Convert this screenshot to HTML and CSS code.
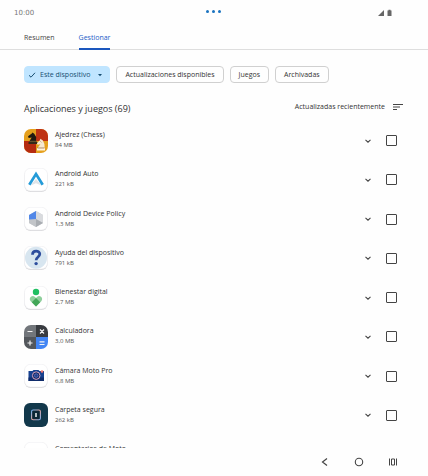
FILE: index.html
```html
<!DOCTYPE html>
<html lang="es">
<head>
    <meta charset="UTF-8">
    <meta name="viewport" content="width=device-width, initial-scale=1.0">
    <title>Gestionar aplicaciones</title>
    <link rel="stylesheet" href="styles.css">
</head>
<body>
    <!-- Formas compartidas -->
    <svg class="defs" width="0" height="0">
        <symbol id="chevron" viewBox="0 0 8 8"><path d="M1.5 2.8 4 5.2 6.5 2.8" fill="none" stroke="#444" stroke-width="1.1"/></symbol>
        <symbol id="tile" viewBox="0 0 24 24">
            <rect x="0.5" y="1" width="23" height="23" rx="6" fill="#d8d8da"/>
            <rect x="0.5" y="0.3" width="23" height="22.7" rx="6" fill="#fff" stroke="#ededf0" stroke-width="0.6"/>
        </symbol>
        <clipPath id="round"><rect width="24" height="24" rx="7"/></clipPath>
    </svg>

    <div class="screen">
        <header class="status-bar">
            <span class="clock">10:00</span>
            <div class="dots"><i></i><i></i><i></i></div>
            <svg class="status-icons" width="16" height="8" viewBox="0 0 16 8">
                <path d="M1 7 7 1V7Z" fill="#666"/>
                <path d="M10.5 1.6h1V.8h2v.8h1V7h-4Z" fill="#666"/>
            </svg>
        </header>

        <nav class="tabs">
            <a class="tab" href="#resumen">Resumen</a>
            <a class="tab active" href="#gestionar">Gestionar</a>
        </nav>

        <main class="content">
            <div class="chips">
                <button class="chip selected">
                    <svg width="8" height="8" viewBox="0 0 8 8"><path d="M1 4.3 3 6.2 7 1.8" fill="none" stroke="#164e72"/></svg>
                    Este dispositivo
                    <svg class="caret" width="6" height="6" viewBox="0 0 6 6"><path d="M1 2h4L3 4.3Z" fill="#164e72"/></svg>
                </button>
                <button class="chip">Actualizaciones disponibles</button>
                <button class="chip">Juegos</button>
                <button class="chip">Archivadas</button>
            </div>

            <div class="list-header">
                <h1>Aplicaciones y juegos (69)</h1>
                <button class="sort">
                    Actualizadas recientemente
                    <svg width="10" height="8" viewBox="0 0 10 8"><path d="M0 1.5h10M0 4h7M0 6.5h4" stroke="#444"/></svg>
                </button>
            </div>

            <ul class="app-list">
                <li class="app">
                    <svg class="app-icon" viewBox="0 0 24 24">
                        <g clip-path="url(#round)">
                            <rect width="24" height="24" fill="#e5a01d"/>
                            <rect x="12" width="12" height="12" fill="#bf3214"/>
                            <rect y="12" width="12" height="12" fill="#b52b10"/>
                            <path d="M5 13.5h8l-1-2 .2-3.5-2-3.3L8.5 3.5 7.8 4.6 4 7.3l.7 1.8 3-.6-2 3.2Z" fill="#211a12"/>
                            <path d="M4.5 13h9v2h-9Z" fill="#332a1b"/>
                            <path d="M5.5 12.3h7" stroke="#c9a760" stroke-width="0.5"/>
                            <path d="M13.5 19.5h7.2l-.3-4.5-1.5-3.5-2.5-1.8-.5 1.5-3 3 .7 1.6 2.8-.5-2 2.4Z" fill="#f6e9d0"/>
                            <path d="M13 19h8v2.4h-8Z" fill="#fff5df"/>
                            <path d="M13.5 19h7M16.5 12.5l.8.8" stroke="#7a4a2a" stroke-width="0.6"/>
                        </g>
                    </svg>
                    <div class="app-text">
                        <label for="app1">Ajedrez (Chess)</label>
                        <span>84 MB</span>
                    </div>
                    <button class="expand" aria-label="Detalles"><svg width="8" height="8"><use href="#chevron"/></svg></button>
                    <input type="checkbox" id="app1">
                </li>
                <li class="app">
                    <svg class="app-icon" viewBox="0 0 24 24">
                        <use href="#tile"/>
                        <path d="M12 11 6.5 17.5 12 15.2 17.5 17.5Z" fill="#dfe4e8"/>
                        <path d="M5.3 16.8 12 6 18.7 16.8" fill="none" stroke="#249bd8" stroke-width="2.7"/>
                    </svg>
                    <div class="app-text">
                        <label for="app2">Android Auto</label>
                        <span>221 kB</span>
                    </div>
                    <button class="expand" aria-label="Detalles"><svg width="8" height="8"><use href="#chevron"/></svg></button>
                    <input type="checkbox" id="app2">
                </li>
                <li class="app">
                    <svg class="app-icon" viewBox="0 0 24 24">
                        <use href="#tile"/>
                        <path d="M12 4 19 8v8l-7 4-7-4V8Z" fill="#c9ccd0"/>
                        <path d="M12 4v8l-7 4V8Z" fill="#5288e8"/>
                        <path d="M12 4l7 4v8l-7-4Z" fill="#d9dbde"/>
                        <path d="M5 12.5 12 12v8l-7-4Z" fill="#c2c5c9"/>
                        <path d="M12 12l7 4-7 4Z" fill="#a9adb2"/>
                    </svg>
                    <div class="app-text">
                        <label for="app3">Android Device Policy</label>
                        <span>1,3 MB</span>
                    </div>
                    <button class="expand" aria-label="Detalles"><svg width="8" height="8"><use href="#chevron"/></svg></button>
                    <input type="checkbox" id="app3">
                </li>
                <li class="app">
                    <svg class="app-icon" viewBox="0 0 24 24">
                        <use href="#tile"/>
                        <circle cx="12" cy="11.7" r="11" fill="#d8e6f0"/>
                        <path d="M8.5 8.7c0-4.8 7.3-4.6 7.3-.6 0 2.9-3.7 2.9-3.7 6.1" fill="none" stroke="#2d4d9d" stroke-width="2.7"/>
                        <circle cx="12.1" cy="17.6" r="1.7" fill="#2d4d9d"/>
                    </svg>
                    <div class="app-text">
                        <label for="app4">Ayuda del dispositivo</label>
                        <span>791 kB</span>
                    </div>
                    <button class="expand" aria-label="Detalles"><svg width="8" height="8"><use href="#chevron"/></svg></button>
                    <input type="checkbox" id="app4">
                </li>
                <li class="app">
                    <svg class="app-icon" viewBox="0 0 24 24">
                        <use href="#tile"/>
                        <circle cx="12" cy="6" r="3.2" fill="#1fbf61"/>
                        <path d="M12 20.5 6.7 15.2c-2.7-3 1.5-7 4.3-4.2l1 1 1-1c2.8-2.8 7 1.2 4.3 4.2Z" fill="#8fcf9c"/>
                        <path d="M12 12l4.2 4.2L12 20.5l-4.2-4.3Z" fill="#43a758"/>
                    </svg>
                    <div class="app-text">
                        <label for="app5">Bienestar digital</label>
                        <span>2,7 MB</span>
                    </div>
                    <button class="expand" aria-label="Detalles"><svg width="8" height="8"><use href="#chevron"/></svg></button>
                    <input type="checkbox" id="app5">
                </li>
                <li class="app">
                    <svg class="app-icon" viewBox="0 0 24 24">
                        <g clip-path="url(#round)">
                            <rect width="12" height="12" fill="#72767b"/>
                            <rect x="12" width="12" height="12" fill="#383b40"/>
                            <rect y="12" width="12" height="12" fill="#53575c"/>
                            <rect x="12" y="12" width="12" height="12" fill="#4285f4"/>
                            <path d="M3.5 6.5h5M16 4.5l4 4m0-4-4 4M6 15.5v5M3.5 18h5M15.5 16.8h5m-5 2.7h5" stroke="#f2f2f2" stroke-width="1.2"/>
                        </g>
                    </svg>
                    <div class="app-text">
                        <label for="app6">Calculadora</label>
                        <span>3,0 MB</span>
                    </div>
                    <button class="expand" aria-label="Detalles"><svg width="8" height="8"><use href="#chevron"/></svg></button>
                    <input type="checkbox" id="app6">
                </li>
                <li class="app">
                    <svg class="app-icon" viewBox="0 0 24 24">
                        <use href="#tile"/>
                        <path d="M4.5 7h4l1-1h5l1 1H20v10H4.5Z" fill="#17418f"/>
                        <path d="M4.5 13.5H20V17H4.5Z" fill="#102c6b"/>
                        <circle cx="12.2" cy="11.6" r="3.8" fill="#16275f" stroke="#d5a3c0"/>
                        <circle cx="12.2" cy="11.6" r="1.8" fill="#243b86" stroke="#6a8ce0" stroke-width="0.6"/>
                        <circle cx="18" cy="7.5" r="1.3" fill="#ef7770"/>
                    </svg>
                    <div class="app-text">
                        <label for="app7">Cámara Moto Pro</label>
                        <span>6,8 MB</span>
                    </div>
                    <button class="expand" aria-label="Detalles"><svg width="8" height="8"><use href="#chevron"/></svg></button>
                    <input type="checkbox" id="app7">
                </li>
                <li class="app">
                    <svg class="app-icon" viewBox="0 0 24 24">
                        <linearGradient id="safe" x2="1" y2="1">
                            <stop offset="0" stop-color="#6fb4f5"/>
                            <stop offset="0.5" stop-color="#e9a7a0"/>
                            <stop offset="1" stop-color="#7fb0ee"/>
                        </linearGradient>
                        <rect width="24" height="24" rx="6" fill="#12384b"/>
                        <rect x="7.6" y="7" width="8.8" height="9.8" rx="1.5" fill="#0c2635" stroke="url(#safe)" stroke-width="1.1"/>
                        <path d="M12 10v4" stroke="#fff" stroke-width="1.4"/>
                    </svg>
                    <div class="app-text">
                        <label for="app8">Carpeta segura</label>
                        <span>262 kB</span>
                    </div>
                    <button class="expand" aria-label="Detalles"><svg width="8" height="8"><use href="#chevron"/></svg></button>
                    <input type="checkbox" id="app8">
                </li>
                <li class="app">
                    <svg class="app-icon" viewBox="0 0 24 24"><use href="#tile"/></svg>
                    <div class="app-text">
                        <label for="app9">Comentarios de Moto</label>
                        <span></span>
                    </div>
                    <button class="expand" aria-label="Detalles"><svg width="8" height="8"><use href="#chevron"/></svg></button>
                    <input type="checkbox" id="app9">
                </li>
            </ul>
        </main>

        <footer class="nav-bar">
            <button aria-label="Atrás"><svg width="10" height="10" viewBox="0 0 10 10"><path d="M7 1.5 2.5 5 7 8.5" fill="none" stroke="#444" stroke-width="1.2"/></svg></button>
            <button aria-label="Inicio"><svg width="10" height="10" viewBox="0 0 10 10"><circle cx="5" cy="5" r="3.7" fill="none" stroke="#444" stroke-width="1.1"/></svg></button>
            <button aria-label="Recientes"><svg width="10" height="10" viewBox="0 0 10 10"><path d="M1.5 1.5v7M8.5 1.5v7M3.5 2h3v6h-3Z" fill="none" stroke="#444"/></svg></button>
        </footer>
    </div>
</body>
</html>
```

FILE: styles.css
```css
body {
    font-family: "Open Sans", sans-serif;
    margin: 0;
    background-color: #fefefe;
    color: #333;
    font-size: 7px;
}
button {
    font: inherit;
    color: inherit;
    background: none;
    border: none;
    padding: 0;
    cursor: pointer;
}
svg {
    display: block;
}
.defs {
    position: absolute;
}
.screen {
    display: flex;
    flex-direction: column;
    height: 100vh;
}
.status-bar {
    display: grid;
    grid-template-columns: 1fr auto 1fr;
    align-items: center;
    height: 26px;
    padding: 0 35px 0 14px;
}
.clock {
    font-family: "DejaVu Sans", sans-serif;
    color: #777;
}
.dots {
    display: flex;
    gap: 3px;
    margin: 0 0 3px 20px;
}
.dots i {
    width: 3px;
    height: 3px;
    border-radius: 50%;
    background-color: #1a73c0;
}
.status-icons {
    justify-self: end;
}
.tabs {
    display: flex;
    gap: 24px;
    height: 23px;
    padding: 0 24px;
    border-bottom: 1px solid #dedede;
}
.tab {
    line-height: 23px;
    color: #444;
    text-decoration: none;
}
.tab.active {
    color: #1a5dc8;
    border-bottom: 2px solid #1a56bd;
    height: 22px;
    font-weight: 500;
}
.content {
    flex: 1;
    min-height: 0;
    display: flex;
    flex-direction: column;
    padding: 16px 31px 0 24px;
}
.chips {
    display: flex;
    gap: 6px;
}
.chip {
    display: flex;
    align-items: center;
    height: 17px;
    padding: 0 8px;
    border: 1px solid #d0d0d0;
    border-radius: 4px;
    white-space: nowrap;
    box-sizing: border-box;
}
.chip.selected {
    gap: 4px;
    padding: 0 6px 0 3px;
    border-color: #c0e5ff;
    background-color: #c0e5ff;
    color: #164e72;
}
.caret {
    margin-left: 3px;
}
.list-header {
    display: flex;
    align-items: center;
    justify-content: space-between;
    height: 16px;
    margin: 17px -6px 0 0;
}
h1 {
    margin: 0;
    font-size: 9px;
    font-weight: 500;
}
.sort {
    display: flex;
    align-items: center;
    gap: 8px;
    margin-bottom: 3px;
}
.app-list {
    flex: 1;
    min-height: 0;
    overflow: hidden;
    margin: 5px 0 0;
    padding: 0;
    list-style: none;
}
.app {
    display: flex;
    align-items: center;
    height: 12%;
}
.app-icon {
    width: 24px;
    height: 24px;
    margin-right: 7px;
}
.app-text {
    flex: 1;
    display: flex;
    flex-direction: column;
    gap: 2px;
    padding-bottom: 2px;
}
.app-text label {
    line-height: 9px;
}
.app-text span {
    font-size: 6px;
    line-height: 8px;
    height: 8px;
    color: #555;
}
.expand {
    margin-right: 14px;
}
.app input {
    appearance: none;
    width: 11px;
    height: 11px;
    margin: 0;
    border: 1px solid #444;
    border-radius: 1px;
}
.app input:checked {
    background-color: #1a56bd;
}
.nav-bar {
    display: flex;
    align-items: center;
    justify-content: flex-end;
    gap: 24px;
    height: 28px;
    padding-right: 30px;
}
```
